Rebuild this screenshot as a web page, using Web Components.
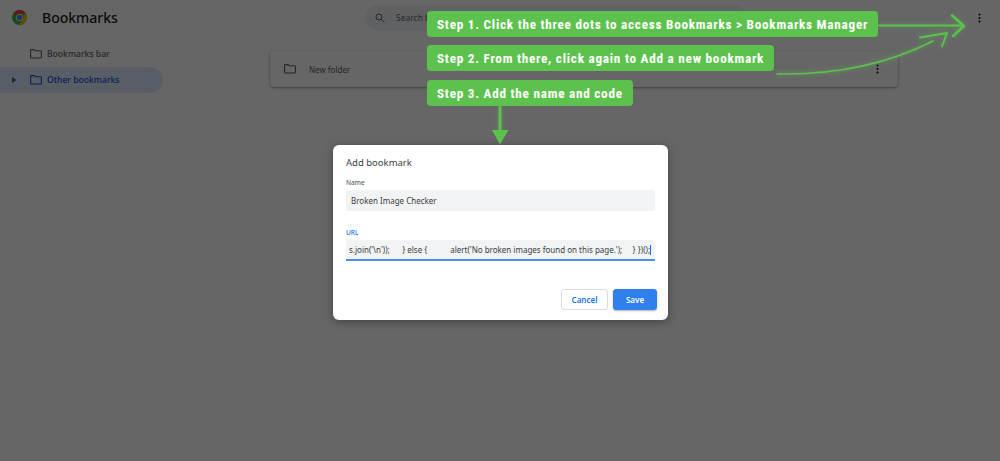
<!DOCTYPE html>
<html lang="en">
<head>
<meta charset="utf-8">
<title>Bookmarks</title>
<style>
html, body { margin: 0; height: 100%; }
body { width: 1000px; height: 461px; overflow: hidden; position: relative; background: #fff; font-family: Roboto, "Liberation Sans", sans-serif; }
</style>
</head>
<body>
<bm-app>
  <bm-header slot="header" title-text="Bookmarks"></bm-header>
  <bm-sidebar slot="side">
    <tree-row>Bookmarks bar</tree-row>
    <tree-row selected arrow>Other bookmarks</tree-row>
  </bm-sidebar>
  <list-card slot="main">New folder</list-card>
</bm-app>

<bm-scrim>
  <add-dialog>
    <text-field label="Name" value="Broken Image Checker"></text-field>
    <text-field label="URL" focused value="s.join('\n'));      } else {           alert('No broken images found on this page.');     } })();"></text-field>
    <push-button slot="actions">Cancel</push-button>
    <push-button slot="actions" primary>Save</push-button>
  </add-dialog>
</bm-scrim>

<step-notes>
  <step-label>Step 1. Click the three dots to access Bookmarks &gt; Bookmarks Manager</step-label>
  <step-label>Step 2. From there, click again to Add a new bookmark</step-label>
  <step-label class="last">Step 3. Add the name and code</step-label>
</step-notes>

<script>
const folderIcon = `<svg width="12" height="10" viewBox="0 0 12 10" fill="none" stroke="currentColor" stroke-width="1.1"><path d="M.6 1.2c0-.3.2-.6.6-.6h3l1 1.2h5.600c.3 0 .6.3.6.6v6c0 .3-.3.6-.6.6H1.200c-.4 0-.6-.3-.6-.6z"/></svg>`;
const dots = `<svg width="3" height="10" viewBox="0 0 3 10" fill="currentColor"><circle cx="1.500" cy="1.500" r="1"/><circle cx="1.500" cy="5" r="1"/><circle cx="1.500" cy="8.500" r="1"/></svg>`;

class BmApp extends HTMLElement {
    constructor() {
        super();
        this.attachShadow({ mode: 'open' });
        this.shadowRoot.innerHTML = `
            <style>
                :host { display: block; height: 461px; background: #fff; color: #202124; }
                .body { display: flex; padding-top: 2px; }
                .side { width: 270px; flex: none; }
                .main { flex: 1; padding: 14px 102px 0 0; }
            </style>
            <slot name="header"></slot>
            <div class="body">
                <div class="side"><slot name="side"></slot></div>
                <div class="main"><slot name="main"></slot></div>
            </div>`;
    }
}
customElements.define('bm-app', BmApp);

class BmHeader extends HTMLElement {
    constructor() {
        super();
        this.attachShadow({ mode: 'open' });
    }
    connectedCallback() {
        const title = this.getAttribute('title-text') || '';
        this.shadowRoot.innerHTML = `
            <style>
                :host { display: flex; align-items: center; height: 35px; padding: 0 19px 0 12px; }
                svg.logo { flex: none; }
                h1 { margin: 0 0 0 15px; width: 324px; flex: none; font: 500 14px/20px "Noto Sans", sans-serif; color: #202124; }
                .search { width: 380px; height: 26px; border-radius: 13px; background: #f1f3f4; display: flex; align-items: center; gap: 11px; padding-left: 9px; color: #5f6368; font: 8.500px "Noto Sans", sans-serif; box-sizing: border-box; }
                .menu { margin-left: auto; color: #000; display: flex; }
            </style>
            <svg class="logo" width="15" height="15" viewBox="0 0 24 24">
                <circle cx="12" cy="12" r="12" fill="#4caf50"/>
                <path d="M12 0a12 12 0 0 1 10.4 6H12a6 6 0 0 0-5.6 3.8L2.4 4.6A12 12 0 0 1 12 0z" fill="#ea4335"/>
                <path d="M22.4 6A12 12 0 0 1 12 24l5.2-9a6 6 0 0 0 0-9z" fill="#fbbc05"/>
                <circle cx="12" cy="12" r="5.600" fill="#fff"/>
                <circle cx="12" cy="12" r="4.400" fill="#4285f4"/>
            </svg>
            <h1>${title}</h1>
            <div class="search">
                <svg width="10" height="10" viewBox="0 0 10 10" fill="none" stroke="currentColor" stroke-width="1"><circle cx="4" cy="4" r="3"/><path d="M6.2 6.2 9.4 9.4"/></svg>
                <span>Search b</span>
            </div>
            <span class="menu">${dots}</span>`;
    }
}
customElements.define('bm-header', BmHeader);

class BmSidebar extends HTMLElement {
    constructor() {
        super();
        this.attachShadow({ mode: 'open' });
        this.shadowRoot.innerHTML = `
            <style>
                :host { display: flex; flex-direction: column; width: 163px; padding-top: 4px; }
            </style>
            <slot></slot>`;
    }
}
customElements.define('bm-sidebar', BmSidebar);

class TreeRow extends HTMLElement {
    constructor() {
        super();
        this.attachShadow({ mode: 'open' });
    }
    connectedCallback() {
        this.shadowRoot.innerHTML = `
            <style>
                :host { display: flex; align-items: center; height: 26px; padding-left: 12px; color: #5f6368; font: 500 8.600px "Noto Sans", sans-serif; border-radius: 0 13px 13px 0; }
                :host([selected]) { background: #dfe9ff; color: #0b57d0; }
                .arrow { width: 18px; flex: none; color: #5f6368; display: flex; }
                svg { flex: none; }
                .label { margin-left: 5px; }
            </style>
            <span class="arrow">${this.hasAttribute('arrow') ? '<svg width="5" height="6" viewBox="0 0 5 6" fill="currentColor"><path d="M0 0l4.5 3L0 6z"/></svg>' : ''}</span>
            ${folderIcon}
            <span class="label"><slot></slot></span>`;
    }
}
customElements.define('tree-row', TreeRow);

class ListCard extends HTMLElement {
    constructor() {
        super();
        this.attachShadow({ mode: 'open' });
        this.shadowRoot.innerHTML = `
            <style>
                :host { display: flex; align-items: center; height: 36px; padding: 0 19px 0 14px; background: #fff; border-radius: 4px; box-shadow: 0 1px 3px rgba(60,64,67,.35), 0 1px 2px rgba(60,64,67,.2); color: #5f6368; font: 8px "Noto Sans", sans-serif; }
                .label { margin-left: 13px; flex: 1; }
                .menu { color: #000; display: flex; }
            </style>
            ${folderIcon}
            <span class="label"><slot></slot></span>
            <span class="menu">${dots}</span>`;
    }
}
customElements.define('list-card', ListCard);

class BmScrim extends HTMLElement {
    constructor() {
        super();
        this.attachShadow({ mode: 'open' });
        // the scrim covers the whole page, the dialog sits in it by flex
        this.shadowRoot.innerHTML = `
            <style>
                :host { position: absolute; inset: 0; background: rgba(0,0,0,.6); display: flex; justify-content: center; align-items: flex-start; padding: 145px 0 0 1px; box-sizing: border-box; }
            </style>
            <slot></slot>`;
    }
}
customElements.define('bm-scrim', BmScrim);

class AddDialog extends HTMLElement {
    constructor() {
        super();
        this.attachShadow({ mode: 'open' });
        this.shadowRoot.innerHTML = `
            <style>
                :host { display: block; width: 335px; height: 175px; box-sizing: border-box; padding: 11px 13px 10px; background: #fff; border-radius: 6px; box-shadow: 0 2px 8px rgba(0,0,0,.35); color: #202124; }
                h2 { margin: 0 0 9px; font: 400 9.500px/13px "Noto Sans", sans-serif; color: #3c4043; }
                .fields { display: flex; flex-direction: column; gap: 17px; }
                .actions { display: flex; justify-content: flex-end; gap: 5px; margin: 28px -2px 0 0; }
            </style>
            <h2>Add bookmark</h2>
            <div class="fields"><slot></slot></div>
            <div class="actions"><slot name="actions"></slot></div>`;
    }
}
customElements.define('add-dialog', AddDialog);

class TextField extends HTMLElement {
    constructor() {
        super();
        this.attachShadow({ mode: 'open' });
    }
    connectedCallback() {
        const label = this.getAttribute('label') || '';
        const value = this.getAttribute('value') || '';
        this.shadowRoot.innerHTML = `
            <style>
                :host { display: block; width: 309px; font-family: "Noto Sans", sans-serif; }
                label { display: block; height: 12px; font: 500 6.500px/10px "Noto Sans", sans-serif; color: #5f6368; }
                :host([focused]) label { color: #1a73e8; }
                .box { height: 21px; box-sizing: border-box; padding: 0 5px; background: #f1f3f4; border-radius: 3px; font-size: 8px; line-height: 21px; color: #3c4043; white-space: pre; }
                :host([focused]) .box { border-radius: 3px 3px 0 0; border-bottom: 2px solid #4a90e8; line-height: 19px; padding-left: 3px; }
                .caret { display: inline-block; width: 1px; height: 10px; background: #1a73e8; vertical-align: -2px; }
            </style>
            <label>${label}</label>
            <div class="box">${value}${this.hasAttribute('focused') ? '<span class="caret"></span>' : ''}</div>`;
    }
}
customElements.define('text-field', TextField);

class PushButton extends HTMLElement {
    constructor() {
        super();
        this.attachShadow({ mode: 'open' });
        this.shadowRoot.innerHTML = `
            <style>
                :host { display: flex; align-items: center; justify-content: center; width: 47px; height: 21px; box-sizing: border-box; border: 1px solid #dadce0; border-radius: 3px; background: #fff; color: #1a73e8; font: 600 8px "Noto Sans", sans-serif; }
                :host([primary]) { width: 44px; background: #2f7fec; border-color: #2f7fec; color: #fff; box-shadow: 0 1px 2px rgba(0,0,0,.3); }
            </style>
            <slot></slot>`;
    }
}
customElements.define('push-button', PushButton);

class StepNotes extends HTMLElement {
    constructor() {
        super();
        this.attachShadow({ mode: 'open' });
        // annotation layer on top of the screenshot
        this.shadowRoot.innerHTML = `
            <style>
                :host { position: absolute; inset: 0; display: block; pointer-events: none; }
                .steps { position: absolute; left: 427px; top: 11px; display: flex; flex-direction: column; align-items: flex-start; gap: 8px; }
                ::slotted(.last) { margin-top: 1px; }
                svg { position: absolute; left: 0; top: 0; }
            </style>
            <svg width="1000" height="461" fill="none" stroke="#5cc24d" stroke-linecap="round" stroke-linejoin="round">
                <defs><filter id="glow" x="-20%" y="-60%" width="140%" height="220%"><feGaussianBlur stdDeviation="2.5"/></filter></defs>
                <g filter="url(#glow)" opacity=".5" stroke-width="2.5">
                    <path d="M879 25.5H964M952 15.5 964 26 953 36"/>
                    <path d="M777 74C840 75 890 63 933 41M920 37 947 33 942 47"/>
                    <path d="M500 106V132"/>
                </g>
                <path d="M879 25.5H962" stroke-width="2"/>
                <path d="M952 15.5 964 26 953 36" stroke-width="2.4"/>
                <path d="M777 74C840 75 890 63 933 41" stroke-width="1.6"/>
                <path d="M920 37.5 947 33 942 46.5" stroke-width="1.8"/>
                <path d="M500 106V131" stroke-width="3" stroke-linecap="butt"/>
                <path d="M492 130H508.500L500 144.500Z" fill="#5cc24d" stroke="none"/>
            </svg>
            <div class="steps"><slot></slot></div>`;
    }
}
customElements.define('step-notes', StepNotes);

class StepLabel extends HTMLElement {
    constructor() {
        super();
        this.attachShadow({ mode: 'open' });
        this.shadowRoot.innerHTML = `
            <style>
                :host { display: block; height: 26px; box-sizing: border-box; padding: 0 10px; border-radius: 4px; background: #5cc24d; color: #fff; font: 700 13.200px/27px Roboto, sans-serif; font-stretch: 75%; letter-spacing: .75px; white-space: nowrap; }
            </style>
            <slot></slot>`;
    }
}
customElements.define('step-label', StepLabel);
</script>
</body>
</html>
